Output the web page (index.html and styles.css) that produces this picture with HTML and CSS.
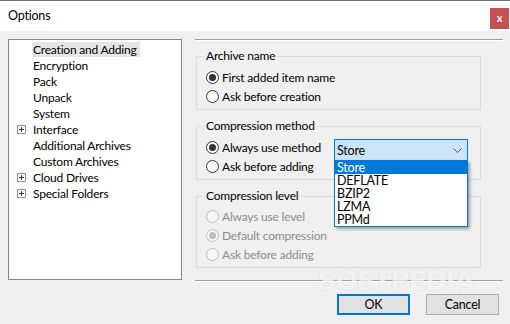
FILE: index.html
```html
<!DOCTYPE html>
<html lang="en">
<head>
  <meta charset="UTF-8">
  <title>Options</title>
  <link rel="stylesheet" href="styles.css">
</head>
<body>
  <div class="window">
    <div class="titlebar">
      <span class="title">Options</span>
      <span class="close">x</span>
    </div>

    <div class="body">
      <div class="main">
        <ul class="tree">
          <li class="item"><span class="exp"></span><span class="label selected">Creation and Adding</span></li>
          <li class="item"><span class="exp"></span><span class="label">Encryption</span></li>
          <li class="item"><span class="exp"></span><span class="label">Pack</span></li>
          <li class="item"><span class="exp"></span><span class="label">Unpack</span></li>
          <li class="item"><span class="exp"></span><span class="label">System</span></li>
          <li class="item"><span class="exp plus"></span><span class="label">Interface</span></li>
          <li class="item"><span class="exp"></span><span class="label">Additional Archives</span></li>
          <li class="item"><span class="exp"></span><span class="label">Custom Archives</span></li>
          <li class="item"><span class="exp plus"></span><span class="label">Cloud Drives</span></li>
          <li class="item"><span class="exp plus"></span><span class="label">Special Folders</span></li>
        </ul>

        <div class="page">
          <div class="etched"></div>

          <fieldset class="group group-name">
            <legend>Archive name</legend>
            <div class="row"><span class="radio checked"></span>First added item name</div>
            <div class="row"><span class="radio"></span>Ask before creation</div>
          </fieldset>

          <fieldset class="group group-method">
            <legend>Compression method</legend>
            <div class="row">
              <span class="radio checked"></span>Always use method
              <div class="combo">
                <span>Store</span>
                <svg class="chevron" width="9" height="5" viewBox="0 0 9 5">
                  <polyline points="0.5,0.5 4.5,4.5 8.5,0.5" fill="none" stroke="#555" stroke-width="1"/>
                </svg>
                <ul class="dropdown">
                  <li class="opt active">Store</li>
                  <li class="opt">DEFLATE</li>
                  <li class="opt">BZIP2</li>
                  <li class="opt">LZMA</li>
                  <li class="opt">PPMd</li>
                </ul>
              </div>
            </div>
            <div class="row"><span class="radio"></span>Ask before adding</div>
          </fieldset>

          <fieldset class="group group-level disabled">
            <legend>Compression level</legend>
            <div class="row"><span class="radio"></span>Always use level</div>
            <div class="row"><span class="radio checked"></span>Default compression</div>
            <div class="row"><span class="radio"></span>Ask before adding</div>
          </fieldset>

          <div class="spacer"></div>
          <div class="etched"></div>
        </div>
      </div>

      <div class="buttons">
        <button class="btn default">OK</button>
        <button class="btn">Cancel</button>
      </div>
    </div>

    <div class="watermark">SOFTPEDIA</div>
  </div>
</body>
</html>
```

FILE: styles.css
```css
body {
  margin: 0;
  padding: 0;
  font-family: Lato, "Noto Sans", sans-serif;
  font-size: 12px;
  letter-spacing: -0.2px;
  color: #000;
}

.window {
  position: relative;
  width: 510px;
  height: 324px;
  background-color: #f0f0f0;
  overflow: hidden;
}

.titlebar {
  display: flex;
  align-items: flex-start;
  height: 30px;
  background-color: #fff;
  border-top: 1px solid #707070;
}

.title {
  margin: 7px 0 0 8px;
  font-size: 12.5px;
}

.close {
  margin: 7px 1px 0 auto;
  width: 19px;
  height: 21px;
  line-height: 19px;
  text-align: center;
  background-color: #c75050;
  color: #fff;
  font-weight: bold;
  font-size: 11px;
}

.main {
  display: flex;
  padding: 8px 0 0 8px;
}

/* tree */
.tree {
  list-style: none;
  margin: 0;
  padding: 1px 0 0 0;
  width: 174px;
  height: 241px;
  box-sizing: border-box;
  background-color: #fff;
  border: 1px solid #828790;
}

.item {
  display: flex;
  align-items: center;
  height: 16px;
}

.exp {
  width: 9px;
  height: 9px;
  margin: 0 6px 0 8px;
  box-sizing: border-box;
  position: relative;
}

.exp.plus {
  border: 1px solid #919191;
}

.exp.plus::before,
.exp.plus::after {
  content: "";
  position: absolute;
  background-color: #333;
}

.exp.plus::before {
  left: 1px;
  top: 3px;
  width: 5px;
  height: 1px;
}

.exp.plus::after {
  left: 3px;
  top: 1px;
  width: 1px;
  height: 5px;
}

.label {
  padding: 0 3px 0 1px;
  line-height: 15px;
}

.label.selected {
  background-color: #e5e5e5;
}

/* right page */
.page {
  display: flex;
  flex-direction: column;
  margin-left: 13px;
  width: 308px;
  height: 243px;
}

.etched {
  height: 1px;
  border-top: 1px solid #a0a0a0;
  background-color: #fff;
}

.spacer {
  flex: 1;
}

.group {
  margin: 0 0 8px 1px;
  width: 285px;
  box-sizing: border-box;
  border: 1px solid #dcdcdc;
  padding: 4px 0 3px 9px;
  min-width: 0;
}

.group-name {
  margin-top: 7px;
}

.group-level {
  padding-top: 3px;
}

.group legend {
  margin-left: -2px;
  padding: 0 2px;
  line-height: 16px;
}

.row {
  display: flex;
  align-items: center;
  height: 19px;
  position: relative;
}

.radio {
  width: 13px;
  height: 13px;
  box-sizing: border-box;
  border: 1px solid #333;
  border-radius: 50%;
  background-color: #fff;
  margin-right: 3px;
  position: relative;
}

.radio.checked::after {
  content: "";
  position: absolute;
  left: 2px;
  top: 2px;
  width: 7px;
  height: 7px;
  border-radius: 50%;
  background-color: #333;
}

.disabled .row {
  color: #8d8d8d;
}

.disabled .radio {
  border-color: #bcbcbc;
  background-color: #f7f7f7;
}

.disabled .radio.checked::after {
  background-color: #bcbcbc;
}

/* combo box */
.combo {
  position: absolute;
  left: 128px;
  top: 1px;
  width: 134px;
  height: 22px;
  box-sizing: border-box;
  border: 1px solid #0078d7;
  background-color: #cce4f7;
  display: flex;
  align-items: center;
  padding-left: 2px;
  font-size: 12.5px;
  z-index: 2;
}

.chevron {
  margin-left: auto;
  margin-right: 5px;
}

.dropdown {
  list-style: none;
  margin: 0;
  padding: 0;
  position: absolute;
  left: -1px;
  top: 20px;
  width: 134px;
  box-sizing: border-box;
  border: 1px solid #0078d7;
  background-color: #fff;
  box-shadow: 2px 2px 3px rgba(0, 0, 0, 0.35);
}

.opt {
  height: 13px;
  line-height: 13px;
  padding-left: 2px;
  color: #000;
}

.opt.active {
  background-color: #0078d7;
  color: #fff;
}

/* buttons */
.buttons {
  display: flex;
  justify-content: flex-end;
  gap: 16px;
  padding: 12px 11px 0 0;
}

.btn {
  width: 73px;
  height: 21px;
  box-sizing: border-box;
  font-family: inherit;
  font-size: 12.5px;
  letter-spacing: inherit;
  background-color: #e1e1e1;
  border: 1px solid #adadad;
  padding: 0;
  color: #000;
}

.btn.default {
  border: 2px solid #0078d7;
}

.watermark {
  position: absolute;
  left: 318px;
  top: 266px;
  font-family: "DejaVu Sans", sans-serif;
  font-weight: bold;
  font-size: 26px;
  letter-spacing: -1px;
  color: rgba(255, 255, 255, 0.7);
  text-shadow: 0 0 2px rgba(0, 0, 0, 0.12);
  pointer-events: none;
}
```
